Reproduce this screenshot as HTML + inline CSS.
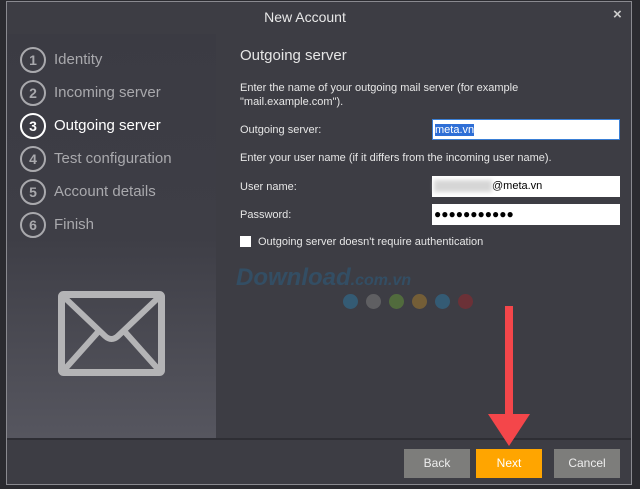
<!DOCTYPE html>
<html><head><meta charset="utf-8"><style>
*{margin:0;padding:0;box-sizing:border-box}
body{width:640px;height:489px;background:#2b2b30;font-family:"Liberation Sans",sans-serif;position:relative;overflow:hidden;color:#ddd}
.dlg{position:absolute;left:6px;top:1px;width:626px;height:484px;background:#3d3d44;border:1px solid #8a8a90}
.t{position:absolute;font-size:11px;color:#e6e6e6;white-space:nowrap}
.side{position:absolute;left:7px;top:34px;width:209px;height:404px;background:linear-gradient(#3b3b43 0%,#3e3e46 50%,#56565f 100%)}
.step{position:absolute;left:20px;font-size:15px;color:#a9a9ad;height:26px;line-height:25px}
.step .c{position:absolute;left:0;top:0;width:26px;height:26px;border:2px solid #a9a9ad;border-radius:50%;text-align:center;font-weight:bold;font-size:14px;line-height:22px}
.step span.l{position:absolute;left:34px;top:0;white-space:nowrap}
.inp{position:absolute;left:432px;width:188px;height:21px;background:#fff;font-size:11px;color:#000;line-height:20px;padding-left:2px}
.btn{position:absolute;top:449px;width:66px;height:29px;background:#7d7d7b;color:#eee;font-size:12px;text-align:center;line-height:29px}
</style></head><body>
<div class="dlg"></div>
<div class="t" style="left:0;width:610px;text-align:center;top:9px;font-size:14px;color:#e8e8e8">New Account</div>
<div class="t" style="left:613px;top:6px;font-size:15px;color:#ccc;font-weight:bold">×</div>
<div class="side"></div>
<div class="step" style="top:47px"><div class="c">1</div><span class="l">Identity</span></div>
<div class="step" style="top:80px"><div class="c">2</div><span class="l">Incoming server</span></div>
<div class="step" style="top:113px;color:#fff"><div class="c" style="border-color:#fff">3</div><span class="l">Outgoing server</span></div>
<div class="step" style="top:146px"><div class="c">4</div><span class="l">Test configuration</span></div>
<div class="step" style="top:179px"><div class="c">5</div><span class="l">Account details</span></div>
<div class="step" style="top:212px"><div class="c">6</div><span class="l">Finish</span></div>
<svg style="position:absolute;left:58px;top:291px" width="107" height="85" viewBox="0 0 107 85"><rect x="3.5" y="3.5" width="100" height="78" rx="2" fill="none" stroke="#b4b4b6" stroke-width="7"/><path d="M7 7 L47 45 Q53.5 51 60 45 L100 7 M7 78 L40 41 M100 78 L67 41" fill="none" stroke="#b4b4b6" stroke-width="6"/></svg>
<div class="t" style="left:240px;top:47px;font-size:15px">Outgoing server</div>
<div class="t" style="left:240px;top:82px">Enter the name of your outgoing mail server (for example</div>
<div class="t" style="left:240px;top:96px">"mail.example.com").</div>
<div class="t" style="left:240px;top:124px">Outgoing server:</div>
<div class="inp" style="top:119px;border:1px solid #3a7fd5"><span style="background:#2f6fd6;color:#fff">meta.vn</span></div>
<div class="t" style="left:240px;top:152px">Enter your user name (if it differs from the incoming user name).</div>
<div class="t" style="left:240px;top:181px">User name:</div>
<div class="inp" style="top:176px"><span style="display:inline-block;width:58px;height:12px;background:#d6d6d6;vertical-align:middle;filter:blur(2px)"></span>@meta.vn</div>
<div class="t" style="left:240px;top:209px">Password:</div>
<div class="inp" style="top:204px;font-size:12px;letter-spacing:0px">●●●●●●●●●●●</div>
<div style="position:absolute;left:240px;top:236px;width:11px;height:11px;background:#fff"></div>
<div class="t" style="left:258px;top:236px">Outgoing server doesn't require authentication</div>
<div class="t" style="left:236px;top:264px;font-size:24px;font-weight:bold;font-style:italic;color:#2d5a7a;opacity:.6">Download<span style="font-size:16px">.com.vn</span></div>
<div style="position:absolute;left:343px;top:294px;display:flex;gap:8px;opacity:.6">
<i style="width:15px;height:15px;border-radius:50%;background:#2f6f95"></i><i style="width:15px;height:15px;border-radius:50%;background:#777"></i><i style="width:15px;height:15px;border-radius:50%;background:#5f8a3a"></i><i style="width:15px;height:15px;border-radius:50%;background:#9a7530"></i><i style="width:15px;height:15px;border-radius:50%;background:#2f6f95"></i><i style="width:15px;height:15px;border-radius:50%;background:#8a2a30"></i></div>
<div style="position:absolute;left:7px;top:438px;width:624px;height:2px;background:#2e2e34"></div>
<div class="btn" style="left:404px">Back</div>
<div class="btn" style="left:476px;background:#ffa500;color:#fff">Next</div>
<div class="btn" style="left:554px">Cancel</div>
<svg style="position:absolute;left:486px;top:304px" width="46" height="144"><rect x="19" y="2" width="8" height="112" fill="#f4464a"/><path d="M2 110 L44 110 L23 142Z" fill="#f4464a"/></svg>
</body></html>
